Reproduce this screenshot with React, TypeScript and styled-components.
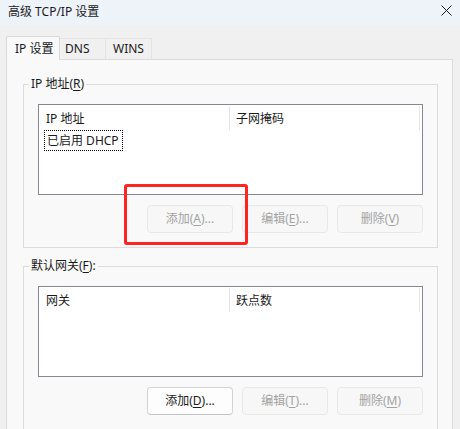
import React from 'react';
import styled, { createGlobalStyle } from 'styled-components';

const GlobalStyle = createGlobalStyle`
  html, body {
    margin: 0;
    padding: 0;
    background: #f0f0f0;
  }
  body {
    font-family: "Noto Sans", "Noto Sans CJK SC", sans-serif;
    font-size: 12px;
    color: #1a1a1a;
  }
`;

const Window = styled.div`
  position: relative;
  width: 460px;
  height: 429px;
  overflow: hidden;
  background: #f0f0f0;
  display: flex;
  flex-direction: column;
`;

const TitleBar = styled.div`
  height: 25px;
  flex-shrink: 0;
  display: flex;
  align-items: center;
  justify-content: space-between;
  padding: 0 8px 0 8px;
  background: #eef2f9;
  line-height: 16px;
`;

const Title = styled.span`
  margin-top: -1px;
`;

const CloseButton = styled.button`
  width: 12px;
  height: 12px;
  margin-top: -4px;
  padding: 0;
  border: 0;
  background: transparent;
  display: flex;
  align-items: center;
  justify-content: center;
`;

const Body = styled.div`
  flex: 1;
  padding: 11px 7px 0 6px;
  display: flex;
  flex-direction: column;
`;

const TabRow = styled.div`
  display: flex;
  align-items: flex-end;
  height: 24px;
`;

const Tab = styled.div<{ $active?: boolean; $w: number; $pl: number }>`
  position: relative;
  box-sizing: border-box;
  width: ${p => p.$w}px;
  padding-left: ${p => p.$pl}px;
  display: flex;
  align-items: center;
  height: ${p => (p.$active ? 24 : 21)}px;
  margin-bottom: ${p => (p.$active ? 0 : 1)}px;
  background: ${p => (p.$active ? '#f9f9f9' : '#f0f0f0')};
  border: 1px solid ${p => (p.$active ? '#d9d9d9' : '#e3e3e3')};
  border-bottom: 0;
  border-left-width: ${p => (p.$active ? 1 : 0)}px;
  border-radius: ${p => (p.$active ? '2px 2px 0 0' : '0')};
  z-index: ${p => (p.$active ? 1 : 0)};
  line-height: 16px;
`;

const Panel = styled.div`
  flex: 1;
  margin-top: -1px;
  background: #f9f9f9;
  border: 1px solid #dcdcdc;
  padding: 16px 14px 0 16px;
  display: flex;
  flex-direction: column;
  gap: 10px;
`;

const Group = styled.fieldset`
  margin: 0;
  min-width: 0;
  padding: 12px 14px 14px 14px;
  border: 1px solid #dcdcdc;
  display: flex;
  flex-direction: column;
`;

const Legend = styled.legend`
  margin-left: -9px;
  padding: 0 2px;
  line-height: 16px;
`;

const ListBox = styled.div`
  box-sizing: border-box;
  height: 91px;
  background: #ffffff;
  border: 1px solid #858891;
  display: flex;
  flex-direction: column;
`;

const Header = styled.div`
  height: 25px;
  display: flex;
  align-items: stretch;
`;

const HeaderCell = styled.div<{ $w?: number }>`
  box-sizing: border-box;
  width: ${p => (p.$w ? `${p.$w}px` : 'auto')};
  flex: ${p => (p.$w ? '0 0 auto' : '1')};
  padding: 1px 0 0 7px;
  display: flex;
  align-items: center;
  border-right: 1px solid #e5e5e5;
  margin: 1px 0 0 0;
  line-height: 16px;
  &:last-child {
    margin-right: 2px;
    padding-left: 6px;
  }
`;

const Rows = styled.div`
  padding: 0 0 0 5px;
`;

const Row = styled.div<{ $focused?: boolean }>`
  display: inline-flex;
  align-items: center;
  height: 21px;
  padding: 0 3px 0 2px;
  box-sizing: border-box;
  border: 1px dotted ${p => (p.$focused ? '#000' : 'transparent')};
  line-height: 16px;
`;

const ButtonRow = styled.div`
  margin-top: 10px;
  display: flex;
  justify-content: flex-end;
  gap: 9px;
`;

const Button = styled.button<{ $disabled?: boolean }>`
  box-sizing: border-box;
  width: 86px;
  height: 28px;
  padding: 0;
  border-radius: 4px;
  font: inherit;
  line-height: 16px;
  color: ${p => (p.$disabled ? '#a3a3a3' : '#1a1a1a')};
  background: ${p => (p.$disabled ? '#f7f7f7' : '#fdfdfd')};
  border: 1px solid ${p => (p.$disabled ? '#e8e8e8' : '#d3d3d3')};
  border-bottom-color: ${p => (p.$disabled ? '#e8e8e8' : '#c3c3c3')};
  & u {
    text-decoration: underline;
    text-underline-offset: 2px;
  }
`;

const Highlight = styled.div`
  position: absolute;
  left: 124px;
  top: 184px;
  width: 124px;
  height: 61px;
  box-sizing: border-box;
  border: 3px solid #ff2424;
  border-radius: 3px;
  pointer-events: none;
`;

const Key = styled.u`
  text-decoration: underline;
  text-underline-offset: 2px;
`;

type ListProps = { cols: [string, string]; rows?: string[] };

const List: React.FC<ListProps> = ({ cols, rows = [] }) => (
  <ListBox>
    <Header>
      <HeaderCell $w={191}>{cols[0]}</HeaderCell>
      <HeaderCell>{cols[1]}</HeaderCell>
    </Header>
    <Rows>
      {rows.map((r, i) => (
        <Row key={r} $focused={i === 0}>{r}</Row>
      ))}
    </Rows>
  </ListBox>
);

const Buttons: React.FC<{ keys: [string, string, string]; addEnabled?: boolean }> = ({ keys, addEnabled }) => (
  <ButtonRow>
    <Button $disabled={!addEnabled}>添加(<Key>{keys[0]}</Key>)...</Button>
    <Button $disabled>编辑(<Key>{keys[1]}</Key>)...</Button>
    <Button $disabled>删除(<Key>{keys[2]}</Key>)</Button>
  </ButtonRow>
);

export default function App() {
  return (
    <Window>
      <GlobalStyle />
      <TitleBar>
        <Title>高级 TCP/IP 设置</Title>
        <CloseButton aria-label="关闭">
          <svg width="11" height="11" viewBox="0 0 11 11">
            <path d="M0.5 0.5 L10.5 10.5 M10.5 0.5 L0.5 10.5" stroke="#1a1a1a" strokeWidth="1" />
          </svg>
        </CloseButton>
      </TitleBar>
      <Body>
        <TabRow>
          <Tab $active $w={54} $pl={8}>IP 设置</Tab>
          <Tab $w={46} $pl={5}>DNS</Tab>
          <Tab $w={46} $pl={7}>WINS</Tab>
        </TabRow>
        <Panel>
          <Group>
            <Legend>IP 地址(<Key>R</Key>)</Legend>
            <List cols={['IP 地址', '子网掩码']} rows={['已启用 DHCP']} />
            <Buttons keys={['A', 'E', 'V']} />
          </Group>
          <Group>
            <Legend>默认网关(<Key>F</Key>):</Legend>
            <List cols={['网关', '跃点数']} />
            <Buttons keys={['D', 'T', 'M']} addEnabled />
          </Group>
        </Panel>
      </Body>
      <Highlight />
    </Window>
  );
}
